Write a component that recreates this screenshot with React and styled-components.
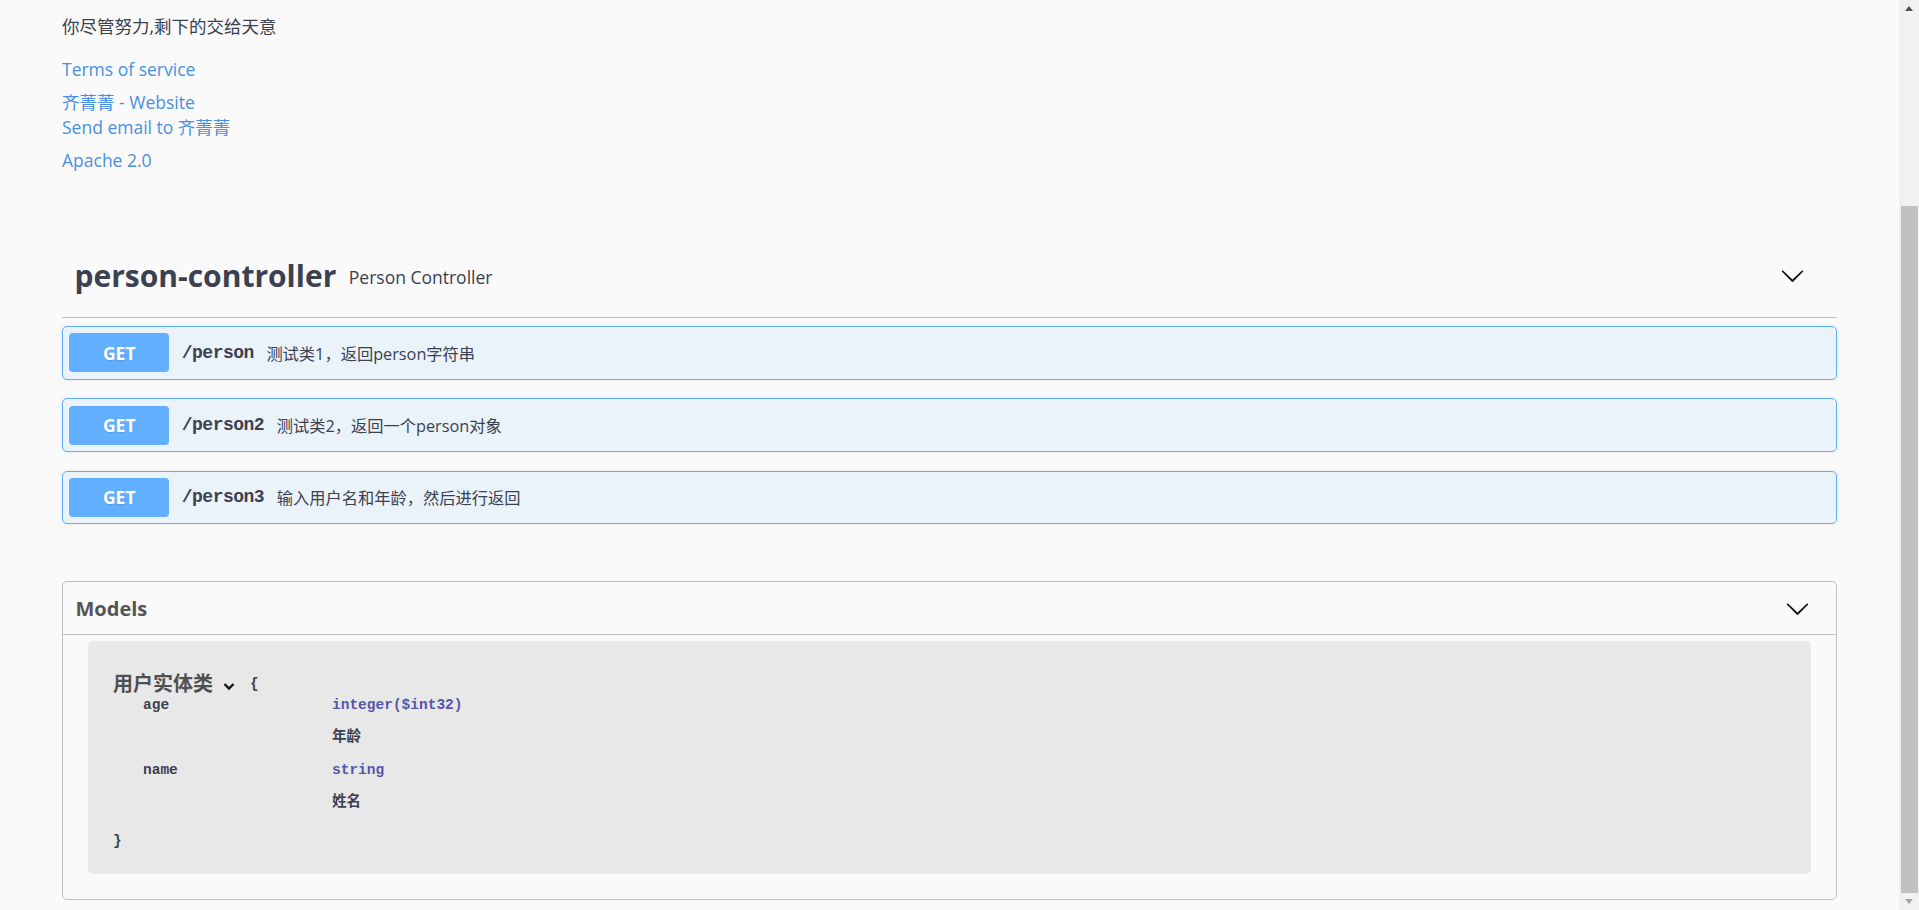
import React from "react";
import styled, { createGlobalStyle } from "styled-components";

const GlobalStyle = createGlobalStyle`
  html, body { margin: 0; padding: 0; background: #fafafa; }
  body {
    font-family: "Open Sans", "Noto Sans CJK SC", sans-serif;
    color: #3b4151;
    overflow: hidden;
  }
  * { box-sizing: border-box; }
`;

const Viewport = styled.div`
  display: flex;
  height: 100vh;
  overflow: hidden;
`;

const Page = styled.main`
  flex: 1;
  min-width: 0;
  padding: 0 62px;
`;

/* ---------- info ---------- */
const Info = styled.section`
  padding-top: 14px;
`;

const Description = styled.p`
  margin: 0 0 17.5px;
  font-size: 17.5px;
  line-height: 25px;
  color: #3b4151;
`;

const InfoBlock = styled.div`
  margin-bottom: 8px;
`;

const InfoLink = styled.a`
  display: block;
  font-size: 17.5px;
  line-height: 25px;
  color: #4990e2;
  text-decoration: none;
`;

/* ---------- tag ---------- */
const TagHeader = styled.div`
  display: flex;
  align-items: center;
  height: 85px;
  margin-top: 60.5px;
  padding: 0 32px 0 12.5px;
  border-bottom: 1px solid rgba(59, 65, 81, 0.3);
`;

const TagName = styled.h4`
  margin: 0;
  font-size: 30px;
  font-weight: 700;
  line-height: 41px;
  color: #3b4151;
`;

const TagDesc = styled.small`
  flex: 1;
  padding: 3px 12.5px 0;
  font-size: 17.5px;
  color: #3b4151;
`;

const OpList = styled.div`
  margin-top: 8px;
  display: flex;
  flex-direction: column;
  gap: 18.75px;
`;

const Opblock = styled.div`
  display: flex;
  align-items: center;
  padding: 6.25px;
  border: 1px solid #61affe;
  border-radius: 5px;
  background: rgba(97, 175, 254, 0.1);
  box-shadow: 0 0 3px rgba(0, 0, 0, 0.12);
`;

const Method = styled.span`
  display: flex;
  align-items: center;
  justify-content: center;
  min-width: 100px;
  height: 39px;
  border-radius: 4px;
  background: #61affe;
  color: #fff;
  font-size: 17.5px;
  font-weight: 700;
  text-shadow: 0 1px 0 rgba(0, 0, 0, 0.1);
`;

const OpPath = styled.span`
  padding: 0 12.5px;
  font-family: "Liberation Mono", monospace;
  font-size: 18px;
  font-weight: 700;
  letter-spacing: -0.5px;
  color: #3b4151;
`;

const OpSummary = styled.span`
  font-size: 16.25px;
  color: #3b4151;
`;

/* ---------- models ---------- */
const Models = styled.section`
  margin-top: 57px;
  border: 1px solid rgba(59, 65, 81, 0.3);
  border-radius: 5px;
`;

const ModelsHeader = styled.h4`
  display: flex;
  align-items: center;
  margin: 0;
  padding: 13px 26px 12px 12.5px;
  border-bottom: 1px solid rgba(59, 65, 81, 0.3);
  font-size: 20px;
  line-height: 27px;
  font-weight: 700;
  color: #555;
`;

const HeaderLabel = styled.span`
  flex: 1;
`;

const ModelContainer = styled.div`
  margin: 6px 25px 25px;
  padding: 33px 25px 20.5px;
  background: #e8e8e8;
  border-radius: 5px;
`;

const ModelTitleLine = styled.div`
  display: flex;
  align-items: center;
  height: 20px;
`;

const ModelTitle = styled.span`
  font-size: 20px;
  line-height: 20px;
  font-weight: 700;
  color: #505050;
`;

const Toggle = styled.svg`
  margin-left: 10px;
  margin-top: 5px;
`;

const Brace = styled.span`
  margin-left: ${(p) => p.$indent || "0"};
  font-family: "Liberation Mono", monospace;
  font-size: 14.5px;
  font-weight: 700;
  line-height: 23px;
  color: #3b4151;
`;

const CloseBrace = styled.div`
  margin-top: 16.5px;
  font-family: "Liberation Mono", monospace;
  font-size: 14.5px;
  font-weight: 700;
  line-height: 23px;
  color: #3b4151;
`;

const PropsGrid = styled.div`
  display: grid;
  grid-template-columns: 219px 1fr;
  grid-auto-rows: 23px;
  row-gap: 9.33px;
  font-family: "Liberation Mono", "Noto Sans CJK SC", monospace;
  font-size: 14.5px;
  font-weight: 700;
  line-height: 23px;
`;

const PropName = styled.span`
  padding-left: 30px;
  color: #3b4151;
`;

const PropType = styled.span`
  color: #55a;
`;

const PropDesc = styled.span`
  color: #3b4151;
`;

/* ---------- scrollbar ---------- */
const ScrollBar = styled.div`
  flex: none;
  width: 20px;
  display: flex;
  flex-direction: column;
  align-items: center;
  background: #f1f1f1;
`;

const ScrollButton = styled.div`
  flex: none;
  height: 17px;
  width: 100%;
  display: flex;
  align-items: center;
  justify-content: center;
`;

const ScrollArrow = styled.span`
  width: 0;
  height: 0;
  border-left: 4.5px solid transparent;
  border-right: 4.5px solid transparent;
  ${(p) =>
    p.$down
      ? "border-top: 5px solid #a3a3a3;"
      : "border-bottom: 5px solid #505050;"}
`;

const ScrollThumb = styled.div`
  flex: 1;
  width: 17px;
  margin-top: 189px;
  background: #c1c1c1;
`;

const Chevron = () => (
  <svg width="25" height="25" viewBox="0 0 20 20" aria-hidden="true">
    <path
      fill="#111"
      d="M17.418 6.109c.272-.268.709-.268.979 0s.271.701 0 .969l-7.908 7.83c-.27.268-.707.268-.979 0l-7.908-7.83c-.27-.268-.27-.701 0-.969.271-.268.709-.268.979 0L10 13.25l7.418-7.141z"
    />
  </svg>
);

const operations = [
  { path: "/person", summary: "测试类1，返回person字符串" },
  { path: "/person2", summary: "测试类2，返回一个person对象" },
  { path: "/person3", summary: "输入用户名和年龄，然后进行返回" },
];

const properties = [
  { name: "age", type: "integer($int32)", desc: "年龄" },
  { name: "name", type: "string", desc: "姓名" },
];

export default function App() {
  return (
    <>
      <GlobalStyle />
      <Viewport>
        <Page>
          <Info>
            <Description>你尽管努力,剩下的交给天意</Description>
            <InfoBlock>
              <InfoLink href="#">Terms of service</InfoLink>
            </InfoBlock>
            <InfoBlock>
              <InfoLink href="#">齐菁菁 - Website</InfoLink>
              <InfoLink href="#">Send email to 齐菁菁</InfoLink>
            </InfoBlock>
            <InfoBlock>
              <InfoLink href="#">Apache 2.0</InfoLink>
            </InfoBlock>
          </Info>

          <TagHeader>
            <TagName>person-controller</TagName>
            <TagDesc>Person Controller</TagDesc>
            <Chevron />
          </TagHeader>

          <OpList>
            {operations.map((op) => (
              <Opblock key={op.path}>
                <Method>GET</Method>
                <OpPath>{op.path}</OpPath>
                <OpSummary>{op.summary}</OpSummary>
              </Opblock>
            ))}
          </OpList>

          <Models>
            <ModelsHeader>
              <HeaderLabel>Models</HeaderLabel>
              <Chevron />
            </ModelsHeader>
            <ModelContainer>
              <ModelTitleLine>
                <ModelTitle>用户实体类</ModelTitle>
                <Toggle width="12" height="9" viewBox="0 0 12 9" aria-hidden="true">
                  <polyline
                    points="1.5,2 6,6.5 10.5,2"
                    fill="none"
                    stroke="#111"
                    strokeWidth="2.4"
                  />
                </Toggle>
                <Brace $indent="15px">{"{"}</Brace>
              </ModelTitleLine>
              <PropsGrid>
                {properties.map((p) => (
                  <React.Fragment key={p.name}>
                    <PropName>{p.name}</PropName>
                    <PropType>{p.type}</PropType>
                    <span />
                    <PropDesc>{p.desc}</PropDesc>
                  </React.Fragment>
                ))}
              </PropsGrid>
              <CloseBrace>{"}"}</CloseBrace>
            </ModelContainer>
          </Models>
        </Page>

        <ScrollBar>
          <ScrollButton>
            <ScrollArrow />
          </ScrollButton>
          <ScrollThumb />
          <ScrollButton>
            <ScrollArrow $down />
          </ScrollButton>
        </ScrollBar>
      </Viewport>
    </>
  );
}
